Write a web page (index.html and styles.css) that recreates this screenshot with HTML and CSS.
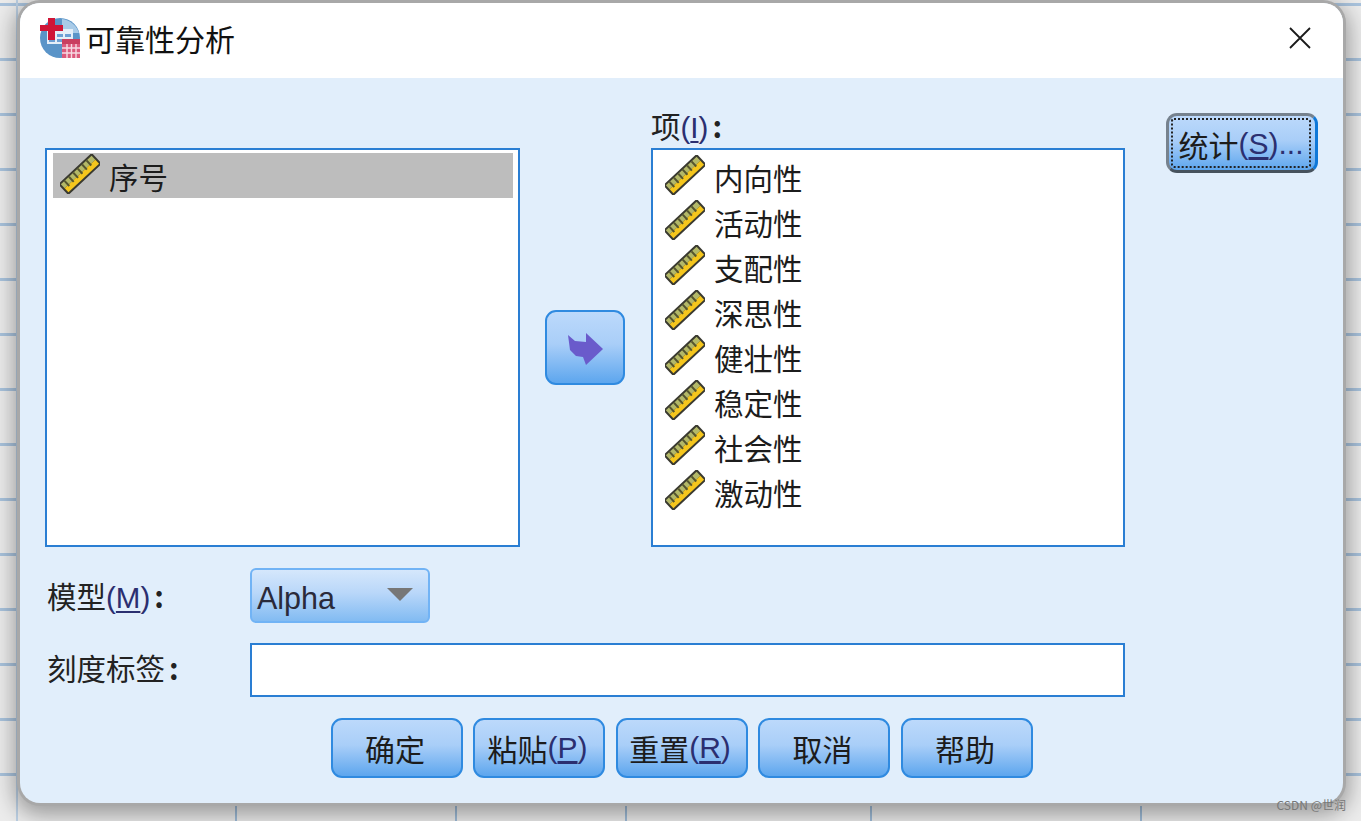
FILE: index.html
```html
<!DOCTYPE html>
<html lang="zh-CN">
<head>
  <meta charset="UTF-8" />
  <meta name="viewport" content="width=device-width, initial-scale=1" />
  <title>可靠性分析</title>
  <link rel="stylesheet" href="styles.css">
</head>
<body>
  <svg class="icon-defs" xmlns="http://www.w3.org/2000/svg" aria-hidden="true">
    <symbol id="ruler" viewBox="0 0 40 40">
      <g transform="rotate(-43 20 20)">
        <rect x="-3" y="12.500" width="46" height="15" rx="1" fill="#3a3a30"/>
        <rect x="-1" y="14.500" width="42" height="5.500" fill="#b3b868"/>
        <rect x="-1" y="20" width="42" height="5.500" fill="#f5c61c"/>
        <path d="M4 14.500v7M10 14.500v7M16 14.500v7M22 14.500v7M28 14.500v7M34 14.500v7" stroke="#55552e" stroke-width="2"/>
      </g>
    </symbol>
  </svg>

  <div class="dialog">
    <div class="title-bar">
      <svg class="app-icon" viewBox="0 0 40 40" xmlns="http://www.w3.org/2000/svg">
        <circle cx="20" cy="20" r="20" fill="#5a94c8"/>
        <path d="M22 1a20 20 0 0 1 17 14H22z" fill="#a9cbe8"/>
        <path d="M7 11h26v15H7z" fill="#e4eef8"/>
        <path d="M9 16h6v3H9zM17 16h6v3h-6zM25 16h6v3h-6zM9 21h6v3H9zM17 21h6v3h-6z" fill="#6c9fd4"/>
        <path d="M8 0h7v7h8v6h-8v9H8v-9H0V7h8z" fill="#cf1537"/>
        <rect x="22" y="21" width="18" height="19" fill="#dc5a7c"/>
        <rect x="22" y="21" width="18" height="5" fill="#c93f5f"/>
        <path d="M22 30h18M22 35h18M27 26v14M31.500 26v14M36 26v14" stroke="#f6dbe3" stroke-width="1.400"/>
      </svg>
      <span class="dialog-title">可靠性分析</span>
      <svg class="close-icon" viewBox="0 0 22 22" xmlns="http://www.w3.org/2000/svg">
        <path d="M1 1l20 20M21 1L1 21" stroke="#1a1a1a" stroke-width="1.800" fill="none"/>
      </svg>
    </div>

    <div class="dialog-body">
      <div class="picker">
        <div class="var-list source-list">
          <div class="var-row selected">
            <svg class="ruler"><use href="#ruler"/></svg>
            <span>序号</span>
          </div>
        </div>

        <div class="mover">
          <button class="btn move-btn">
            <svg viewBox="0 0 38 34" width="38" height="34" xmlns="http://www.w3.org/2000/svg">
              <path d="M37 17L20 1v9L9 9 2 3l2 15 6 6 7 1 3 8z" fill="#6a5bcb"/>
            </svg>
          </button>
        </div>

        <div class="items-col">
          <label class="field-label items-label">项<span class="mn">(<u>I</u>)</span><b class="colon">:</b></label>
          <div class="var-list items-list">
            <div class="var-row"><svg class="ruler"><use href="#ruler"/></svg><span>内向性</span></div>
            <div class="var-row"><svg class="ruler"><use href="#ruler"/></svg><span>活动性</span></div>
            <div class="var-row"><svg class="ruler"><use href="#ruler"/></svg><span>支配性</span></div>
            <div class="var-row"><svg class="ruler"><use href="#ruler"/></svg><span>深思性</span></div>
            <div class="var-row"><svg class="ruler"><use href="#ruler"/></svg><span>健壮性</span></div>
            <div class="var-row"><svg class="ruler"><use href="#ruler"/></svg><span>稳定性</span></div>
            <div class="var-row"><svg class="ruler"><use href="#ruler"/></svg><span>社会性</span></div>
            <div class="var-row"><svg class="ruler"><use href="#ruler"/></svg><span>激动性</span></div>
          </div>
        </div>

        <button class="btn stats-btn"><span class="focus-ring">统计<span class="mn">(<u>S</u>)...</span></span></button>
      </div>

      <div class="form-row model-row">
        <label class="field-label row-label model-label">模型<span class="mn">(<u>M</u>)</span><b class="colon">:</b></label>
        <div class="select-box">
          <span>Alpha</span>
          <i class="caret"></i>
        </div>
      </div>

      <div class="form-row scale-row">
        <label class="field-label row-label scale-label">刻度标签<b class="colon">:</b></label>
        <div class="text-box"></div>
      </div>

      <div class="actions">
        <button class="btn action-btn">确定</button>
        <button class="btn action-btn">粘贴<span class="mn">(<u>P</u>)</span></button>
        <button class="btn action-btn">重置<span class="mn">(<u>R</u>)</span></button>
        <button class="btn action-btn">取消</button>
        <button class="btn action-btn">帮助</button>
      </div>
    </div>
  </div>

  <div class="watermark">CSDN @世润</div>
</body>
</html>
```

FILE: styles.css
```css
* {
  box-sizing: border-box;
  margin: 0;
  padding: 0;
}
html, body {
  width: 1361px;
  height: 821px;
  overflow: hidden;
}
body {
  font-family: "Noto Sans CJK SC", "Liberation Sans", sans-serif;
  color: #1c1c1c;
  position: relative;
  padding: 3px 0 0 20px;
  background-color: #ececec;
  background-image:
    linear-gradient(to right, #9fbcd8 2px, transparent 2px),
    linear-gradient(to right, #9fbcd8 2px, transparent 2px),
    linear-gradient(to right, #9fbcd8 2px, transparent 2px),
    linear-gradient(to right, #9fbcd8 2px, transparent 2px),
    linear-gradient(to right, #9fbcd8 2px, transparent 2px),
    linear-gradient(to right, #bcd0e4 2px, transparent 2px),
    linear-gradient(to bottom, #a9c3dd 3px, transparent 3px);
  background-size: 2px 100%, 2px 100%, 2px 100%, 2px 100%, 2px 100%, 2px 100%, 100% 55px;
  background-position: 235px 0, 455px 0, 625px 0, 870px 0, 1140px 0, 16px 0, 0 3px;
  background-repeat: no-repeat, no-repeat, no-repeat, no-repeat, no-repeat, no-repeat, repeat-y;
}
.icon-defs {
  position: absolute;
  width: 0;
  height: 0;
}

.dialog {
  width: 1323px;
  height: 800px;
  border-radius: 20px;
  overflow: hidden;
  background: #e1eefb;
  box-shadow: 0 0 0 3px #a8a8a8, 0 6px 22px 6px rgba(0, 0, 0, 0.35);
  display: flex;
  flex-direction: column;
}

.title-bar {
  height: 75px;
  flex: none;
  background: #fff;
  display: flex;
  align-items: center;
  padding: 0 32px 5px 20px;
}
.app-icon {
  width: 40px;
  height: 40px;
  margin-right: 5px;
}
.dialog-title {
  font-size: 30px;
  color: #111;
  flex: 1;
}
.close-icon {
  width: 22px;
  height: 22px;
}

.dialog-body {
  flex: 1;
  padding: 32px 25px 0 25px;
}

.picker {
  display: grid;
  grid-template-columns: 475px 131px 474px auto;
  height: 437px;
}
.var-list {
  background: #fff;
  border: 2px solid #2a7ed3;
  height: 399px;
}
.source-list {
  align-self: end;
  padding: 3px 5px 3px 6px;
}
.items-list {
  padding: 4px 12px;
}
.var-row {
  height: 45px;
  display: flex;
  align-items: center;
  font-size: 29.500px;
  line-height: 45px;
}
.var-row span {
  padding-top: 2px;
}
.ruler {
  width: 40px;
  height: 40px;
  flex: none;
  margin-right: 9px;
  margin-top: -4px;
}
.source-list .var-row {
  padding-left: 7px;
}
.selected {
  background: #bdbdbd;
}

.mover {
  display: flex;
  align-items: flex-start;
  justify-content: center;
  padding: 200px 2px 0 0;
}

.btn {
  font-family: inherit;
  color: #1c1c1c;
  border: 2px solid #2f8ae0;
  border-radius: 11px;
  background: linear-gradient(to bottom, #bcd9fb 0%, #a9cef8 45%, #5da6ee 100%);
  display: flex;
  align-items: center;
  justify-content: center;
}
.move-btn {
  width: 80px;
  height: 75px;
  padding-top: 3px;
}

.items-col {
  display: flex;
  flex-direction: column;
}
.field-label {
  font-size: 29.500px;
  line-height: 38px;
  color: #222;
}
.items-label {
  height: 38px;
  flex: none;
  line-height: 30px;
}
.mn {
  color: #2b2f70;
  font-family: "Liberation Sans", sans-serif;
}
.mn u {
  text-underline-offset: 3px;
}
.colon {
  margin-left: 4px;
}

.stats-btn {
  width: 152px;
  height: 60px;
  margin: 3px 0 0 41px;
  padding: 2px 4px 2px 2px;
  border-color: #76828e #0f78d8 #46525d #76828e;
  border-width: 3px;
  font-size: 30px;
}
.focus-ring {
  width: 100%;
  height: 100%;
  padding-top: 2px;
  border: 2px dotted #222;
  border-radius: 3px;
  display: flex;
  align-items: center;
  justify-content: center;
  white-space: nowrap;
}

.form-row {
  display: flex;
  align-items: center;
}
.row-label {
  width: 205px;
  padding-left: 2px;
  flex: none;
}
.model-label {
  padding-top: 1px;
}
.scale-label {
  padding-bottom: 7px;
}
.model-row {
  margin-top: 21px;
}
.scale-row {
  margin-top: 20px;
}
.select-box {
  width: 180px;
  height: 55px;
  border: 2px solid #71b3f5;
  border-radius: 6px;
  background: linear-gradient(to bottom, #d5e7fc 0%, #b9d7f9 45%, #82bbf2 100%);
  display: flex;
  align-items: center;
  justify-content: space-between;
  padding: 5px 15px 0 5px;
  font-family: "Liberation Sans", sans-serif;
  font-size: 30.500px;
  color: #2a2a3a;
}
.caret {
  width: 0;
  height: 0;
  margin-bottom: 8px;
  border-left: 13px solid transparent;
  border-right: 13px solid transparent;
  border-top: 13px solid #777;
}
.text-box {
  width: 875px;
  height: 54px;
  border: 2px solid #2a7ed3;
  background: #fff;
}

.actions {
  display: flex;
  justify-content: center;
  gap: 10.500px;
  margin-top: 21px;
}
.action-btn {
  width: 132px;
  height: 60px;
  padding-right: 3px;
  font-size: 30px;
  white-space: nowrap;
}

.watermark {
  position: absolute;
  right: 15px;
  bottom: 9px;
  font-size: 12px;
  line-height: 14px;
  color: #777;
}
```
